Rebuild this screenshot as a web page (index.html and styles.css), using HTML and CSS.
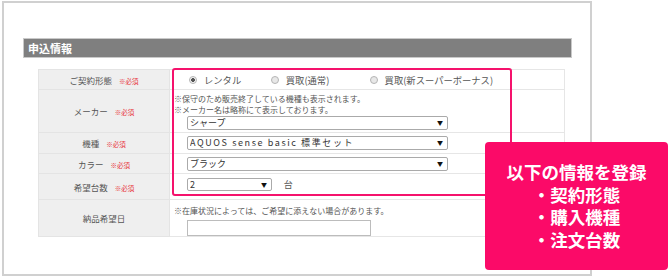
FILE: index.html
```html
<!DOCTYPE html>
<html>
<head>
    <title>申込情報</title>
    <link rel="stylesheet" href="styles.css">
</head>
<body>
    <div class="frame">
        <h2 class="section-title">申込情報</h2>

        <table class="form-table">
            <tr class="row-type">
                <th>ご契約形態 <span class="req">※必須</span></th>
                <td>
                    <label class="radio first"><input type="radio" name="contract" checked>レンタル</label>
                    <label class="radio second"><input type="radio" name="contract">買取(通常)</label>
                    <label class="radio"><input type="radio" name="contract">買取(新スーパーボーナス)</label>
                </td>
            </tr>
            <tr class="row-maker">
                <th>メーカー <span class="req">※必須</span></th>
                <td>
                    <p class="note">※保守のため販売終了している機種も表示されます。<br>※メーカー名は略称にて表示しております。</p>
                    <span class="select wide"><select><option>シャープ</option></select></span>
                </td>
            </tr>
            <tr class="row-model">
                <th>機種 <span class="req">※必須</span></th>
                <td>
                    <span class="select wide spaced"><select><option>AQUOS sense basic 標準セット</option></select></span>
                </td>
            </tr>
            <tr class="row-color">
                <th>カラー <span class="req">※必須</span></th>
                <td>
                    <span class="select wide"><select><option>ブラック</option></select></span>
                </td>
            </tr>
            <tr class="row-count">
                <th>希望台数 <span class="req">※必須</span></th>
                <td>
                    <span class="select small"><select><option>2</option></select></span>
                    <span class="unit">台</span>
                </td>
            </tr>
            <tr class="row-date">
                <th>納品希望日</th>
                <td>
                    <p class="note">※在庫状況によっては、ご希望に添えない場合があります。</p>
                    <input type="text" class="date-input">
                </td>
            </tr>
        </table>
    </div>

    <!-- highlight of the required fields -->
    <div class="highlight"></div>
    <div class="callout">
        <div>以下の情報を登録</div>
        <div>・契約形態</div>
        <div>・購入機種</div>
        <div>・注文台数</div>
    </div>
</body>
</html>
```

FILE: styles.css
```css
body { margin: 0; width: 668px; height: 277px; overflow: hidden; position: relative; background: #fff; font-family: "Noto Sans CJK JP", "Liberation Sans", sans-serif; color: #444; }

.frame { box-sizing: border-box; width: 590px; height: 275px; margin: 1px 0 0 2px; border: 2px solid #d0d0d0; padding: 35px 18px 0 19px; }
.section-title { box-sizing: border-box; margin: 0; height: 20px; padding-left: 4px; background: #7f7f7f; border: 1px solid #c9c9c9; color: #fff; font-size: 11px; font-weight: bold; line-height: 18px; }

.form-table { margin: 11px 0 0 15px; width: 527px; border-collapse: collapse; table-layout: fixed; }
.form-table th { width: 130px; padding: 0; background: #efefef; border: 1px solid #e4e4e4; font-weight: normal; font-size: 8.5px; color: #555; text-align: center; }
.form-table td { padding: 0 0 0 4px; border: 1px solid #e6e6e6; font-size: 8px; color: #555; }
.req { margin-left: 5px; font-size: 6.5px; color: #e8333a; }

.row-type { height: 20px; }
.row-maker { height: 43px; }
.row-model { height: 21px; }
.row-color { height: 20px; }
.row-count { height: 26px; }
.row-date { height: 36px; }

.row-maker td { vertical-align: top; padding-top: 3px; }
.row-date td { vertical-align: top; padding-top: 5px; }
.row-count td { vertical-align: top; padding-top: 4px; }

.radio { display: inline-flex; align-items: center; font-size: 9.3px; color: #555; }
.radio.first { margin-left: 15px; width: 80px; }
.radio.second { width: 97px; }
.radio input { appearance: none; -webkit-appearance: none; box-sizing: border-box; width: 8px; height: 8px; margin: 0 7px 0 0; border: 1px solid #b5b5b5; border-radius: 50%; background: #e8e8e8; }
.radio input:checked { background: radial-gradient(circle, #555 0, #555 1.6px, #f4f4f4 2.2px); }

.note { margin: 0; line-height: 11px; font-size: 8px; color: #555; white-space: nowrap; }

.select { position: relative; display: inline-block; margin-left: 13px; vertical-align: middle; }
.select select { appearance: none; -webkit-appearance: none; box-sizing: border-box; height: 14px; padding: 0 0 0 2px; border: 1px solid #aaa; border-radius: 2px; background: #fff; font-family: inherit; font-size: 9px; line-height: 12px; color: #333; }
.select::after { content: "▼"; position: absolute; right: 5px; top: 3px; font-size: 6px; line-height: 8px; color: #111; pointer-events: none; }
.row-maker .select { display: table; margin-top: 1px; }
.wide select { width: 261px; }
.small select { width: 85px; height: 13px; }
.spaced select { letter-spacing: 1.6px; }
.unit { margin-left: 10px; font-size: 9px; color: #555; vertical-align: middle; }

.date-input { display: block; box-sizing: border-box; width: 184px; height: 16px; margin: 4px 0 0 13px; border: 1px solid #bcbcbc; }

.highlight { position: absolute; left: 172px; top: 68px; width: 340px; height: 128px; box-sizing: border-box; border: 2px solid #f5126c; border-radius: 3px; }
.callout { position: absolute; left: 485px; top: 142px; width: 183px; height: 128px; box-sizing: border-box; background: #fb0a68; border-radius: 4px; color: #fff; font-size: 17.5px; font-weight: bold; line-height: 22.5px; text-align: center; display: flex; flex-direction: column; justify-content: center; }
```
